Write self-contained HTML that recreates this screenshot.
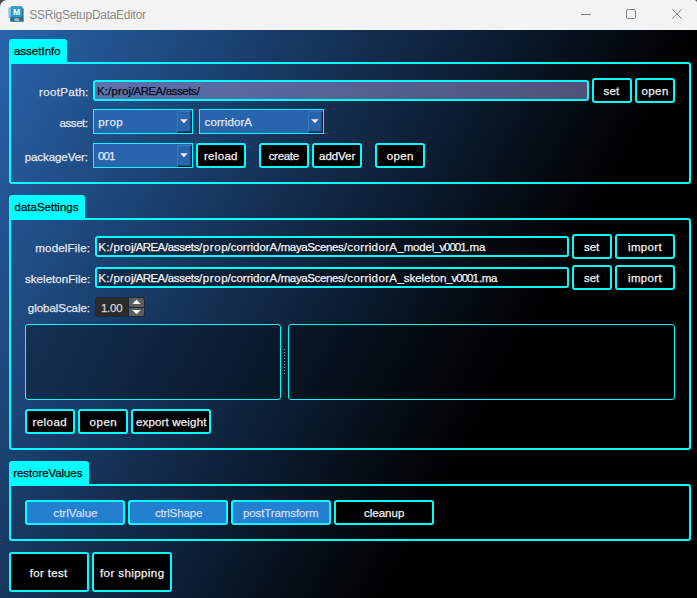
<!DOCTYPE html>
<html><head><meta charset="utf-8"><title>SSRigSetupDataEditor</title>
<style>
html,body{margin:0;padding:0}
body{width:697px;height:598px;overflow:hidden;position:relative;background:#4a4a4a;font-family:"Liberation Sans",sans-serif}
.abs,.t,.grp,.tab,.edit,.combo,.drop,.btn,.list{position:absolute;box-sizing:border-box}
#title{position:absolute;left:0;top:0;width:697px;height:30px;background:#f3f3f3;border-radius:7px 3px 0 0}
#main{position:absolute;left:0;top:30px;width:697px;height:568px;background:linear-gradient(119deg,#2864ac 0px,#000 610px)}
.t{line-height:16px;white-space:pre;-webkit-text-stroke:0.25px currentColor}
.grp{border:2px solid #00ffff;border-radius:0 3px 3px 3px}
.tab{background:#00ffff;border-radius:3px 3px 0 0}
.edit{border:2px solid #00ffff;border-radius:3px;background:rgba(0,0,0,.31)}
.combo{border:1px solid #00ffff;background:#2865ac}
.drop{background:#2a66ad;border-top:1px solid #3a74bc;border-left:1px solid #3a74bc;border-right:1px solid #0f1a33;border-bottom:1px solid #0f1a33;box-shadow:inset -1px -1px 0 #1c4374}
.btn{border:2px solid #00ffff;border-radius:3px}
.list{border:1px solid #00ffff;border-radius:3px;background:rgba(0,0,0,.31)}
</style></head><body>
<div id="title"></div>
<svg class="abs" style="left:8px;top:5px" width="17" height="18" viewBox="8 5 17 18">
<rect x="8.3" y="7.4" width="3" height="10.6" fill="#86c8e2"/>
<rect x="22" y="8.4" width="1.5" height="13.4" fill="#2b5d76"/>
<rect x="10.2" y="16.8" width="13.1" height="5" rx="0.6" fill="#2a6d8a"/>
<rect x="10.8" y="6.1" width="11.5" height="11" fill="#2c9dc9"/>
<text x="16.5" y="14.9" font-family="Liberation Sans, sans-serif" font-weight="bold" font-size="8.6" text-anchor="middle" fill="#fff">M</text>
<text x="16.8" y="20.6" font-family="Liberation Sans, sans-serif" font-weight="bold" font-size="2.8" text-anchor="middle" fill="#d8eaf2">MA</text>
</svg>
<svg class="abs" style="left:570px;top:0" width="127" height="30">
<g fill="none" stroke="#858585" stroke-width="1">
<line x1="11" y1="14.5" x2="21" y2="14.5"/>
<rect x="56.5" y="9.5" width="9" height="9" rx="1.2"/>
<path d="M102.3 9.3 L111.7 18.7 M111.7 9.3 L102.3 18.7"/>
</g></svg>
<div id="main"></div>
<div class="grp" style="left:9px;top:62px;width:682px;height:122px;"></div>
<div class="tab" style="left:9px;top:39px;width:58px;height:24px;"></div>
<div class="grp" style="left:9px;top:218px;width:682px;height:232px;"></div>
<div class="tab" style="left:9px;top:195px;width:76px;height:24px;"></div>
<div class="grp" style="left:9px;top:484px;width:682px;height:57px;"></div>
<div class="tab" style="left:9px;top:461px;width:80px;height:24px;"></div>
<div class="edit" style="left:93px;top:80px;width:496px;height:21px;background:rgba(141,142,204,.55)"></div>
<div class="edit" style="left:95px;top:236px;width:474px;height:21px;"></div>
<div class="edit" style="left:95px;top:267px;width:474px;height:21px;"></div>
<div class="combo" style="left:93px;top:109px;width:100px;height:25px;"></div><div class="drop" style="left:177px;top:111px;width:15px;height:22px;"></div><svg class="abs" style="left:178.5px;top:118px" width="10" height="7"><polygon points="1.2,1.2 8.6,1.2 4.9,5.3" fill="#ffecf6"/></svg>
<div class="combo" style="left:199px;top:109px;width:125px;height:25px;"></div><div class="drop" style="left:308px;top:111px;width:15px;height:22px;"></div><svg class="abs" style="left:309.5px;top:118px" width="10" height="7"><polygon points="1.2,1.2 8.6,1.2 4.9,5.3" fill="#ffecf6"/></svg>
<div class="combo" style="left:93px;top:143px;width:100px;height:25px;"></div><div class="drop" style="left:177px;top:145px;width:15px;height:22px;"></div><svg class="abs" style="left:178.5px;top:152px" width="10" height="7"><polygon points="1.2,1.2 8.6,1.2 4.9,5.3" fill="#ffecf6"/></svg>
<div class="btn" style="left:592px;top:78px;width:40px;height:25px;background:#000"></div>
<div class="btn" style="left:635px;top:78px;width:40px;height:25px;background:#000"></div>
<div class="btn" style="left:196px;top:143px;width:50px;height:25px;background:#000"></div>
<div class="btn" style="left:259px;top:143px;width:50px;height:25px;background:#000"></div>
<div class="btn" style="left:312px;top:143px;width:50px;height:25px;background:#000"></div>
<div class="btn" style="left:375px;top:143px;width:50px;height:25px;background:#000"></div>
<div class="btn" style="left:572px;top:234px;width:40px;height:25px;background:#000"></div>
<div class="btn" style="left:615px;top:234px;width:60px;height:25px;background:#000"></div>
<div class="btn" style="left:572px;top:265px;width:40px;height:25px;background:#000"></div>
<div class="btn" style="left:615px;top:265px;width:60px;height:25px;background:#000"></div>
<div class="btn" style="left:25px;top:409px;width:50px;height:25px;background:#000"></div>
<div class="btn" style="left:78px;top:409px;width:50px;height:25px;background:#000"></div>
<div class="btn" style="left:131px;top:409px;width:80px;height:25px;background:#000"></div>
<div class="btn" style="left:25px;top:500px;width:100px;height:25px;background:#2380d0"></div>
<div class="btn" style="left:128px;top:500px;width:100px;height:25px;background:#2380d0"></div>
<div class="btn" style="left:231px;top:500px;width:100px;height:25px;background:#2380d0"></div>
<div class="btn" style="left:334px;top:500px;width:100px;height:25px;background:#000"></div>
<div class="btn" style="left:9px;top:552px;width:80px;height:40px;background:#000"></div>
<div class="btn" style="left:92px;top:552px;width:80px;height:40px;background:#000"></div>
<div class="list" style="left:25px;top:324px;width:256px;height:76px;"></div>
<div class="list" style="left:288px;top:324px;width:387px;height:76px;"></div>
<div class="abs" style="left:284px;top:349px;width:1px;height:1px;background:#8a8a8a"></div><div class="abs" style="left:284px;top:352px;width:1px;height:1px;background:#8a8a8a"></div><div class="abs" style="left:284px;top:355px;width:1px;height:1px;background:#8a8a8a"></div><div class="abs" style="left:284px;top:358px;width:1px;height:1px;background:#8a8a8a"></div><div class="abs" style="left:284px;top:361px;width:1px;height:1px;background:#8a8a8a"></div><div class="abs" style="left:284px;top:364px;width:1px;height:1px;background:#8a8a8a"></div><div class="abs" style="left:284px;top:367px;width:1px;height:1px;background:#8a8a8a"></div><div class="abs" style="left:284px;top:370px;width:1px;height:1px;background:#8a8a8a"></div><div class="abs" style="left:284px;top:373px;width:1px;height:1px;background:#8a8a8a"></div>
<div class="abs" style="left:95px;top:297px;width:50px;height:20px;background:#1b2a40;border-radius:3px"></div>
<div class="abs" style="left:96px;top:298px;width:48px;height:18px;background:#2b2b2b;border-radius:2px"></div>
<div class="abs" style="left:129px;top:298px;width:15px;height:9px;background:#5d5d5d;border-radius:0 2px 0 0"></div>
<div class="abs" style="left:129px;top:308px;width:15px;height:8px;background:#5d5d5d;border-radius:0 0 2px 0"></div>
<div class="abs" style="left:128px;top:297px;width:1px;height:20px;background:#17253b"></div>
<div class="abs" style="left:128px;top:307px;width:16px;height:1px;background:#17253b"></div>
<svg class="abs" style="left:129px;top:298px" width="15" height="18"><polygon points="7.5,1.8 11.6,6 3.4,6" fill="#fff"/><polygon points="3.4,12 11.6,12 7.5,16.2" fill="#fff"/></svg>
<span class="t" style="-webkit-text-stroke:0;left:29.30px;top:7px;font-size:12px;letter-spacing:-0.279px;color:#8c8c8c">SSRigSetupDataEditor</span>
<span class="t" style="left:13.90px;top:43px;font-size:11.5px;letter-spacing:0.013px;color:#000">assetInfo</span>
<span class="t" style="left:14.60px;top:199px;font-size:11.5px;letter-spacing:-0.009px;color:#000">dataSettings</span>
<span class="t" style="left:13.30px;top:465px;font-size:11.5px;letter-spacing:-0.083px;color:#000">restoreValues</span>
<span class="t" style="left:39.12px;top:84px;font-size:11.5px;letter-spacing:0.315px;color:#e6e6ee">rootPath:</span>
<span class="t" style="left:59.50px;top:115px;font-size:11.5px;letter-spacing:-0.420px;color:#e6e6ee">asset:</span>
<span class="t" style="left:24.64px;top:149px;font-size:11.5px;letter-spacing:-0.060px;color:#e6e6ee">packageVer:</span>
<span class="t" style="left:35.32px;top:240px;font-size:11.5px;letter-spacing:0.178px;color:#e6e6ee">modelFile:</span>
<span class="t" style="left:24.96px;top:271px;font-size:11.5px;letter-spacing:0.057px;color:#e6e6ee">skeletonFile:</span>
<span class="t" style="left:27.80px;top:300px;font-size:11.5px;letter-spacing:-0.036px;color:#e6e6ee">globalScale:</span>
<span class="t" style="left:98.28px;top:114px;font-size:11.5px;letter-spacing:0.453px;color:#e6e6ee">prop</span>
<span class="t" style="left:204.60px;top:114px;font-size:11.5px;letter-spacing:0.100px;color:#e6e6ee">corridorA</span>
<span class="t" style="left:98.04px;top:148px;font-size:11.5px;letter-spacing:-0.940px;color:#e6e6ee">001</span>
<span class="t" style="left:603.50px;top:83px;font-size:11.5px;letter-spacing:0.150px;color:#f2f2f2">set</span>
<span class="t" style="left:641.60px;top:83px;font-size:11.5px;letter-spacing:0.367px;color:#f2f2f2">open</span>
<span class="t" style="left:203.96px;top:148px;font-size:11.5px;letter-spacing:0.312px;color:#f2f2f2">reload</span>
<span class="t" style="left:268.68px;top:148px;font-size:11.5px;letter-spacing:-0.312px;color:#f2f2f2">create</span>
<span class="t" style="left:319.10px;top:148px;font-size:11.5px;letter-spacing:-0.060px;color:#f2f2f2">addVer</span>
<span class="t" style="left:386.80px;top:148px;font-size:11.5px;letter-spacing:0.367px;color:#f2f2f2">open</span>
<span class="t" style="left:583.94px;top:239px;font-size:11.5px;letter-spacing:-0.050px;color:#f2f2f2">set</span>
<span class="t" style="left:628.12px;top:239px;font-size:11.5px;letter-spacing:0.312px;color:#f2f2f2">import</span>
<span class="t" style="left:583.94px;top:270px;font-size:11.5px;letter-spacing:-0.050px;color:#f2f2f2">set</span>
<span class="t" style="left:628.12px;top:270px;font-size:11.5px;letter-spacing:0.312px;color:#f2f2f2">import</span>
<span class="t" style="left:100.90px;top:300px;font-size:11.5px;letter-spacing:-0.200px;color:#d8d8d8">1.00</span>
<span class="t" style="left:32.50px;top:414px;font-size:11.5px;letter-spacing:0.440px;color:#f2f2f2">reload</span>
<span class="t" style="left:89.60px;top:414px;font-size:11.5px;letter-spacing:0.500px;color:#f2f2f2">open</span>
<span class="t" style="left:136.00px;top:414px;font-size:11.5px;letter-spacing:0.167px;color:#f2f2f2">export weight</span>
<span class="t" style="left:53.36px;top:505px;font-size:11.5px;letter-spacing:0.030px;color:#d4dcf4">ctrlValue</span>
<span class="t" style="left:154.90px;top:505px;font-size:11.5px;letter-spacing:-0.150px;color:#d4dcf4">ctrlShape</span>
<span class="t" style="left:242.90px;top:505px;font-size:11.5px;letter-spacing:-0.092px;color:#d4dcf4">postTramsform</span>
<span class="t" style="left:363.90px;top:505px;font-size:11.5px;letter-spacing:0.017px;color:#f2f2f2">cleanup</span>
<span class="t" style="left:29.80px;top:565px;font-size:11.5px;letter-spacing:0.314px;color:#f2f2f2">for test</span>
<span class="t" style="left:100.00px;top:565px;font-size:11.5px;letter-spacing:0.418px;color:#f2f2f2">for shipping</span>
<span class="t" style="left:96.96px;top:83px;font-size:11.5px;letter-spacing:0.140px;color:#0a0a10">K:/proj</span>
<span class="t" style="left:130.90px;top:83px;font-size:11.5px;letter-spacing:-0.550px;color:#0a0a10">/AREA</span>
<span class="t" style="left:162.90px;top:83px;font-size:11.5px;letter-spacing:-0.433px;color:#0a0a10">/assets</span>
<span class="t" style="left:196.80px;top:83px;font-size:11.5px;letter-spacing:1.300px;color:#0a0a10">/</span>
<span class="t" style="left:98.28px;top:239px;font-size:11.5px;letter-spacing:0.350px;color:#f2f2f2">K:/proj</span>
<span class="t" style="left:133.20px;top:239px;font-size:11.5px;letter-spacing:-0.625px;color:#f2f2f2">/AREA</span>
<span class="t" style="left:164.90px;top:239px;font-size:11.5px;letter-spacing:-0.317px;color:#f2f2f2">/assets</span>
<span class="t" style="left:199.04px;top:239px;font-size:11.5px;letter-spacing:0.570px;color:#f2f2f2">/prop</span>
<span class="t" style="left:227.60px;top:239px;font-size:11.5px;letter-spacing:-0.022px;color:#f2f2f2">/corridorA</span>
<span class="t" style="left:277.80px;top:239px;font-size:11.5px;letter-spacing:-0.360px;color:#f2f2f2">/mayaScenes</span>
<span class="t" style="left:343.80px;top:239px;font-size:11.5px;letter-spacing:0.378px;color:#f2f2f2">/corridorA</span>
<span class="t" style="left:397.40px;top:239px;font-size:11.5px;letter-spacing:-0.140px;color:#f2f2f2">_model</span>
<span class="t" style="left:434.10px;top:239px;font-size:11.5px;letter-spacing:-1.060px;color:#f2f2f2">_v0001</span>
<span class="t" style="left:466.28px;top:239px;font-size:11.5px;letter-spacing:0.000px;color:#f2f2f2">.ma</span>
<span class="t" style="left:98.28px;top:270px;font-size:11.5px;letter-spacing:0.350px;color:#f2f2f2">K:/proj</span>
<span class="t" style="left:133.20px;top:270px;font-size:11.5px;letter-spacing:-0.625px;color:#f2f2f2">/AREA</span>
<span class="t" style="left:164.90px;top:270px;font-size:11.5px;letter-spacing:-0.317px;color:#f2f2f2">/assets</span>
<span class="t" style="left:199.04px;top:270px;font-size:11.5px;letter-spacing:0.570px;color:#f2f2f2">/prop</span>
<span class="t" style="left:227.60px;top:270px;font-size:11.5px;letter-spacing:-0.022px;color:#f2f2f2">/corridorA</span>
<span class="t" style="left:277.80px;top:270px;font-size:11.5px;letter-spacing:-0.360px;color:#f2f2f2">/mayaScenes</span>
<span class="t" style="left:343.80px;top:270px;font-size:11.5px;letter-spacing:0.378px;color:#f2f2f2">/corridorA</span>
<span class="t" style="left:397.52px;top:270px;font-size:11.5px;letter-spacing:-0.055px;color:#f2f2f2">_skeleton</span>
<span class="t" style="left:446.10px;top:270px;font-size:11.5px;letter-spacing:-0.980px;color:#f2f2f2">_v0001</span>
<span class="t" style="left:478.96px;top:270px;font-size:11.5px;letter-spacing:-0.380px;color:#f2f2f2">.ma</span>
</body></html>
